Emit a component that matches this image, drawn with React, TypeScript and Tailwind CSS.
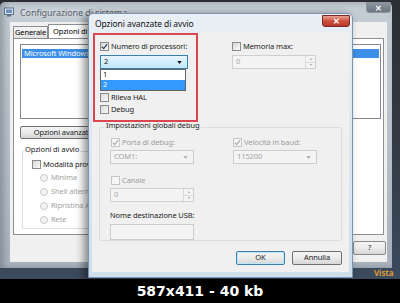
import type { ReactNode } from 'react'

function Check({ checked, disabled }: { checked?: boolean; disabled?: boolean }) {
  return (
    <span
      className={`flex h-[9px] w-[9px] shrink-0 items-center justify-center border ${
        disabled ? 'border-[#c6c6c6] bg-[#f6f6f6]' : 'border-[#8a8c8e] bg-gradient-to-br from-[#d8d8d8] to-[#fbfbfb]'
      }`}
    >
      {checked && (
        <svg viewBox="0 0 8 8" className="h-[7px] w-[7px]">
          <path d="M1 4.3 L3.1 6.4 L7 1.2" fill="none" stroke={disabled ? '#a9a9a9' : '#2e3f52'} strokeWidth="1.3" />
        </svg>
      )}
    </span>
  )
}

function CheckRow({ label, checked, disabled }: { label: string; checked?: boolean; disabled?: boolean }) {
  return (
    <div className="flex items-center gap-[2px] whitespace-nowrap">
      <Check checked={checked} disabled={disabled} />
      <span className={disabled ? 'text-[#9d9d9d]' : 'text-[#1b1b1b]'}>{label}</span>
    </div>
  )
}

function Radio({ label }: { label: string }) {
  return (
    <div className="flex items-center gap-[3px] whitespace-nowrap">
      <span className="h-[8px] w-[8px] shrink-0 rounded-full border border-[#cacaca] bg-[#f3f3f3]" />
      <span className="text-[#a3a3a3]">{label}</span>
    </div>
  )
}

function Arrow({ color = '#3b3b3b' }: { color?: string }) {
  return (
    <svg viewBox="0 0 6 4" className="h-[3px] w-[5px]">
      <path d="M0 0 H6 L3 4 Z" fill={color} />
    </svg>
  )
}

function Combo({ value, disabled, className }: { value: string; disabled?: boolean; className: string }) {
  return (
    <div
      className={`flex items-center justify-between border pl-[3px] pr-[5px] ${className} ${
        disabled ? 'border-[#cdcdcd] bg-[#f4f4f4] text-[#a2a2a2]' : 'border-[#7f9db9] bg-[#ffffff] text-[#111]'
      }`}
    >
      <span>{value}</span>
      <Arrow color={disabled ? '#b4b4b4' : '#333'} />
    </div>
  )
}

function Spin({ value, className }: { value: string; className: string }) {
  return (
    <div className={`flex items-stretch border border-[#cfcfcf] bg-[#f4f4f4] text-[#a4a4a4] ${className}`}>
      <span className="flex flex-1 items-center pl-[3px]">{value}</span>
      <div className="flex w-[10px] flex-col border-l border-[#dadada]">
        <span className="flex flex-1 items-center justify-center border-b border-[#dadada]">
          <svg viewBox="0 0 6 4" className="h-[2px] w-[4px]"><path d="M0 4 H6 L3 0 Z" fill="#b8b8b8" /></svg>
        </span>
        <span className="flex flex-1 items-center justify-center">
          <svg viewBox="0 0 6 4" className="h-[2px] w-[4px]"><path d="M0 0 H6 L3 4 Z" fill="#b8b8b8" /></svg>
        </span>
      </div>
    </div>
  )
}

function Btn({ children, className }: { children: ReactNode; className: string }) {
  return (
    <div
      className={`flex items-center justify-center whitespace-nowrap rounded-[2px] border bg-gradient-to-b from-[#f4f4f4] via-[#ebebeb] to-[#d6d6d6] text-[#1b1b1b] ${className}`}
    >
      {children}
    </div>
  )
}

// the window behind; most of it is covered by the dialog
function BackWindow() {
  return (
    <div className="absolute left-0 top-[2px] flex h-[266px] w-[392px] flex-col rounded-t-[5px] bg-gradient-to-b from-[#c4ccd4] via-[#b9c2cb] to-[#aab4be] shadow-[inset_4px_0_6px_rgba(60,70,80,0.35)]">
      <div className="flex h-[20px] items-center pl-[4px] pr-[1px]">
        <svg viewBox="0 0 10 10" className="h-[10px] w-[10px]">
          <rect x="0.5" y="1" width="9" height="6.5" fill="#dfe6ee" stroke="#5d6f85" />
          <rect x="2" y="2.5" width="6" height="3.5" fill="#6a8fc0" />
          <rect x="3" y="8" width="4" height="1.5" fill="#5d6f85" />
        </svg>
        <span className="ml-[6px] text-[9px] text-[#56606a] [text-shadow:0_0_4px_#fff]">Configurazione di sistema</span>
        <div className="ml-auto flex h-[11px] w-[25px] self-start items-center justify-center rounded-b-[3px] border border-[#8c959e] bg-gradient-to-b from-[#8b949d] to-[#6d7680] text-[8px] font-bold text-white">
          ✕
        </div>
      </div>
      <div className="ml-[10px] flex h-[240px] w-[377px] flex-col bg-[#f0f0f0]">
        <div className="flex h-[16px] items-end pl-[3px]">
          <div className="flex h-[12px] w-[35px] items-center justify-center border border-b-0 border-[#8c8e94] bg-gradient-to-b from-[#f6f6f6] to-[#e1e1e1]">
            Generale
          </div>
          <div className="flex h-[14px] w-[80px] items-center whitespace-nowrap border border-b-0 border-[#8c8e94] bg-white pl-[4px]">
            Opzioni di avvio
          </div>
        </div>
        <div className="ml-[3px] flex h-[197px] w-[371px] flex-col border border-[#8c8e94] bg-white pl-[6px] pt-[5px]">
          <div className="flex h-[75px] w-[361px] flex-col border border-[#828790] bg-white p-[1px] pt-[4px]">
            <div className="flex h-[9px] items-center overflow-hidden whitespace-nowrap bg-[#3d8ee6] pl-[2px] text-white">
              Microsoft Windows Vista (C:\Windows) : Sistema operativo corrente
            </div>
          </div>
          <Btn className="mt-[7px] h-[13px] w-[92px] border-[#707070]">Opzioni avanzate...</Btn>
          <div className="relative ml-[2px] mt-[12px] flex h-[78px] w-[180px] flex-col rounded-[2px] border border-[#d5dfe5] pl-[9px] pt-[8px]">
            <span className="absolute left-[1px] top-[-6px] bg-white px-[1px] text-[#1b1b1b]">Opzioni di avvio</span>
            <CheckRow label="Modalità provvisoria" />
            <div className="ml-[8px] mt-[5px] flex flex-col gap-[6px]">
              <Radio label="Minima" />
              <Radio label="Shell alternativa" />
              <Radio label="Ripristina Active Directory" />
              <Radio label="Rete" />
            </div>
          </div>
        </div>
        <div className="flex justify-end pr-[1px] pt-[6px]">
          <Btn className="h-[14px] w-[33px] border-[#8a8a8a]">?</Btn>
        </div>
      </div>
    </div>
  )
}

function FrontDialog() {
  return (
    <div className="absolute left-[88px] top-[13px] flex h-[265px] w-[265px] flex-col rounded-t-[5px] border border-[#7a95b0] bg-gradient-to-b from-[#e8eff5] via-[#dde7f0] to-[#cfdeeb] shadow-[-4px_2px_8px_rgba(0,0,0,0.45)]">
      <div className="flex h-[19px] items-center pl-[6px] pt-[1px]">
        <span className="text-[8.5px] text-[#111]">Opzioni avanzate di avvio</span>
        <div className="ml-auto mr-[2px] flex h-[12px] w-[28px] self-start items-center justify-center rounded-b-[3px] border border-[#7a2a2a] bg-gradient-to-b from-[#e8a093] via-[#cf4f3e] to-[#b93a2c] text-[8px] font-bold text-white">
          ✕
        </div>
      </div>
      <div className="relative ml-[3px] flex h-[239px] w-[257px] flex-col bg-[#f0f0f0] pl-[8px] pt-[9px]">
        {/* red annotation box drawn over the screenshot */}
        <div className="pointer-events-none absolute left-[1px] top-[0px] h-[89px] w-[105px] border-2 border-[#dc4650]" />
        <div className="flex">
          <div className="flex w-[132px] flex-col">
            <CheckRow label="Numero di processori:" checked />
            <div className="relative mt-[4px]">
              <div className="flex h-[14px] w-[88px] items-center justify-between border border-[#3c7fb1] bg-gradient-to-b from-[#eaf6fd] to-[#bee6fd] pl-[3px] pr-[5px] text-[#111]">
                <span>2</span>
                <Arrow color="#111" />
              </div>
              <div className="absolute left-0 top-[14px] flex w-[86px] flex-col border border-[#646464] bg-white">
                <span className="flex h-[10px] items-center pl-[2px] text-[#111]">1</span>
                <span className="flex h-[10px] items-center bg-[#3399ff] pl-[2px] text-white">2</span>
              </div>
            </div>
            <div className="mt-[24px] flex flex-col gap-[3px]">
              <CheckRow label="Rileva HAL" />
              <CheckRow label="Debug" />
            </div>
          </div>
          <div className="flex flex-col">
            <CheckRow label="Memoria max:" />
            <Spin value="0" className="mt-[4px] h-[14px] w-[84px]" />
          </div>
        </div>
        <div className="relative ml-[-1px] mt-[13px] flex h-[114px] w-[243px] flex-col rounded-[2px] border border-[#d5dfe5] pl-[10px] pt-[10px]">
          <span className="absolute left-[5px] top-[-6px] bg-[#f0f0f0] px-[1px] text-[#1b1b1b]">Impostazioni globali debug</span>
          <div className="flex">
            <div className="flex w-[123px] flex-col pl-[1px]">
              <CheckRow label="Porta di debug:" checked disabled />
            </div>
            <CheckRow label="Velocità in baud:" checked disabled />
          </div>
          <div className="mt-[3px] flex">
            <div className="w-[123px]">
              <Combo value="COM1:" disabled className="h-[14px] w-[84px]" />
            </div>
            <Combo value="115200" disabled className="h-[14px] w-[84px]" />
          </div>
          <div className="mt-[12px] pl-[1px]">
            <CheckRow label="Canale" disabled />
          </div>
          <Spin value="0" className="mt-[3px] h-[14px] w-[84px]" />
          <span className="mt-[10px] text-[#1b1b1b]">Nome destinazione USB:</span>
          <div className="mt-[4px] h-[16px] w-[84px] border border-[#cdcdcd] bg-[#f4f4f4]" />
        </div>
        <div className="mt-[10px] flex gap-[7px] pl-[136px]">
          <Btn className="h-[14px] w-[49px] border-[#3c7fb1] shadow-[inset_0_0_0_1px_#bde6fd]">OK</Btn>
          <Btn className="h-[14px] w-[50px] border-[#707070]">Annulla</Btn>
        </div>
      </div>
    </div>
  )
}

export default function App() {
  return (
    <div className="flex h-[303px] w-[400px] flex-col bg-black font-['Noto_Sans',sans-serif] text-[7.5px] leading-none tracking-[-0.1px]">
      <div className="relative h-[279px] overflow-hidden bg-gradient-to-b from-[#2b2f35] via-[#333a44] to-[#3c4a5e]">
        <span className="absolute left-[374px] top-[269px] text-[8px] font-bold text-[#d89a3a]">Vista</span>
        <BackWindow />
        <FrontDialog />
      </div>
      <div className="flex h-[24px] items-center justify-center font-['DejaVu_Sans',sans-serif] text-[14px] font-bold tracking-normal text-white">
        587x411 - 40 kb
      </div>
    </div>
  )
}
